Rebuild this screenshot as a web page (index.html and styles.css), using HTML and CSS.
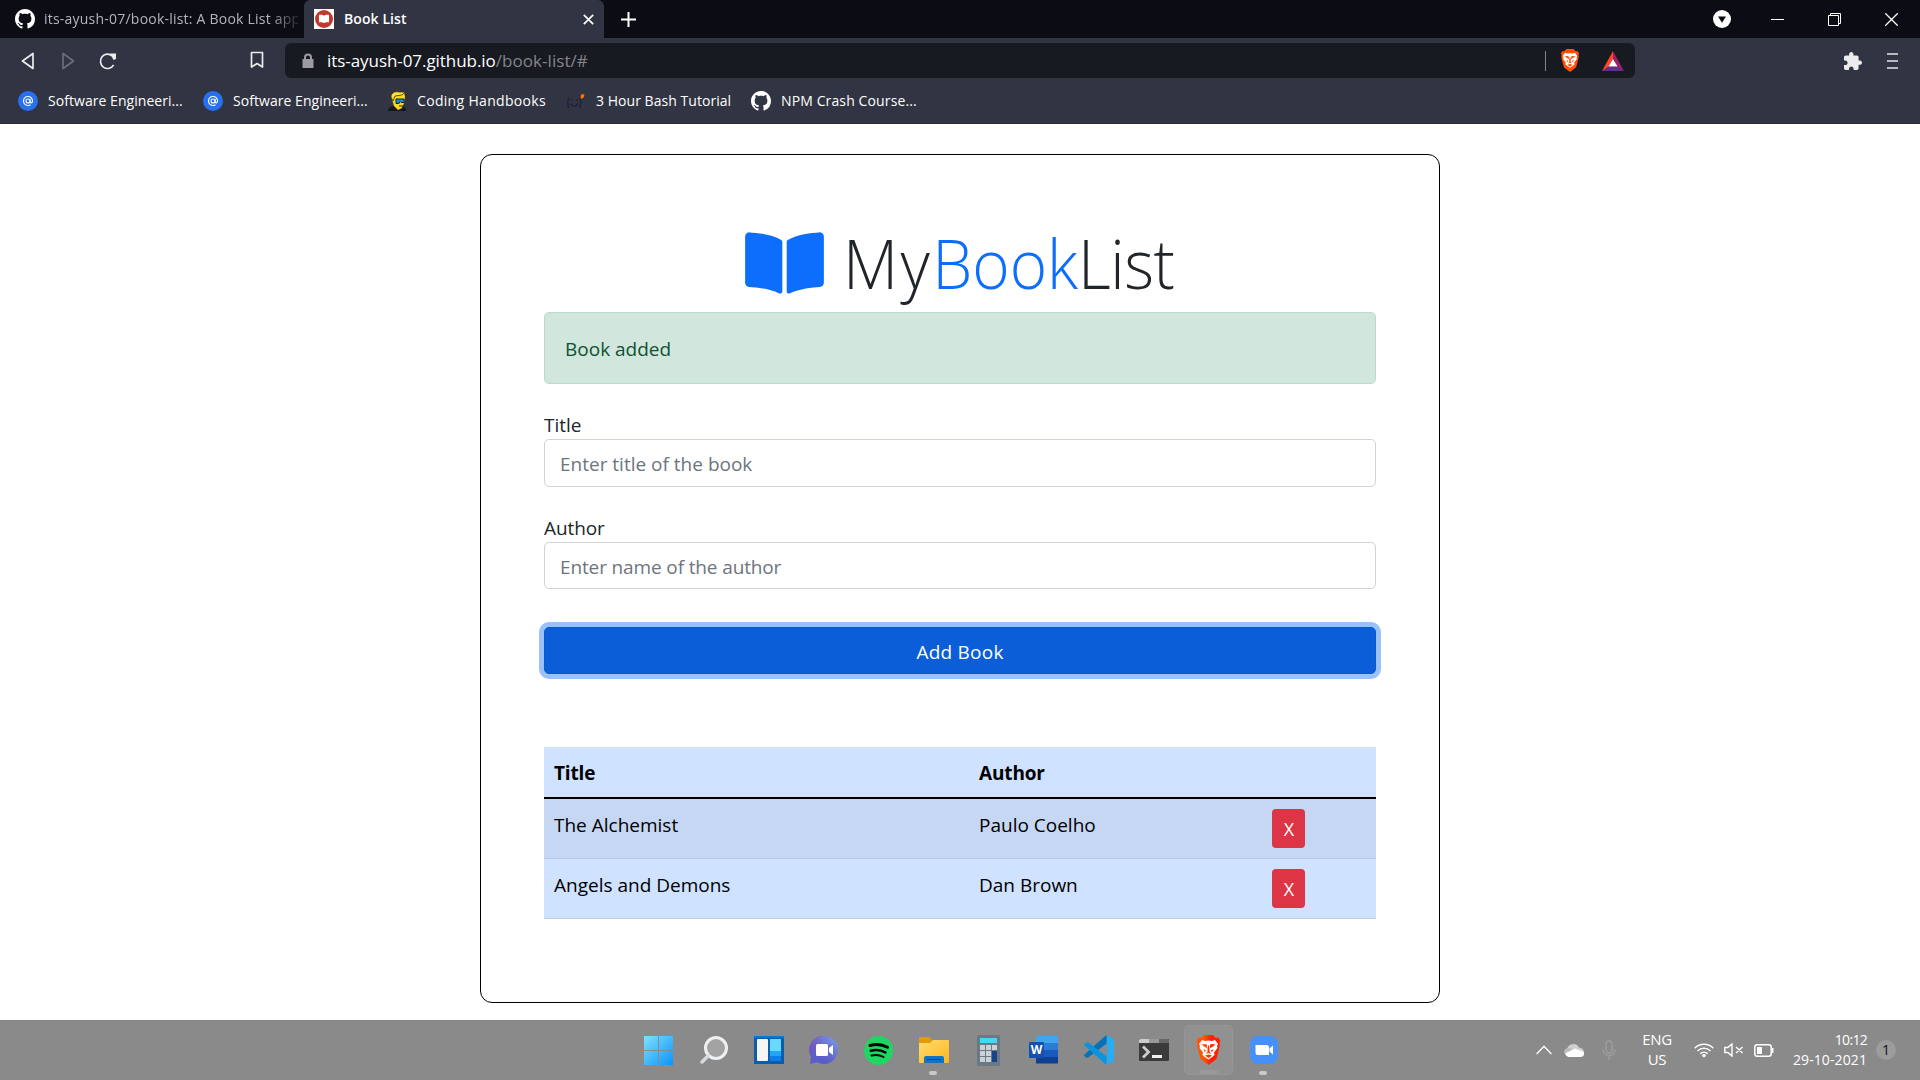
FILE: index.html
```
<!DOCTYPE html>
<html lang="en">
<head>
<meta charset="utf-8">
<title>Book List</title>
<link rel="stylesheet" href="styles.css">
</head>
<body>
<svg class="defs" aria-hidden="true">
  <defs>
    <symbol id="github" viewBox="0 0 16 16"><path fill="#fff" d="M8 0C3.58 0 0 3.58 0 8c0 3.54 2.29 6.53 5.47 7.59.4.07.55-.17.55-.38 0-.19-.01-.82-.01-1.49-2.01.37-2.53-.49-2.69-.94-.09-.23-.48-.94-.82-1.13-.28-.15-.68-.52-.01-.53.63-.01 1.08.58 1.23.82.72 1.21 1.87.87 2.33.66.07-.52.28-.87.51-1.07-1.78-.2-3.64-.89-3.64-3.95 0-.87.31-1.59.82-2.15-.08-.2-.36-1.02.08-2.12 0 0 .67-.21 2.2.82.64-.18 1.32-.27 2-.27s1.36.09 2 .27c1.53-1.04 2.2-.82 2.2-.82.44 1.1.16 1.92.08 2.12.51.56.82 1.27.82 2.15 0 3.07-1.87 3.75-3.65 3.95.29.25.54.73.54 1.48 0 1.07-.01 1.93-.01 2.2 0 .21.15.46.55.38A8.01 8.01 0 0 0 16 8c0-4.42-3.58-8-8-8z"/></symbol>
    <linearGradient id="braveFill" x1="0" x2="1" y1="0" y2="0"><stop offset=".3" stop-color="#ff5500"/><stop offset=".6" stop-color="#ff2000"/></linearGradient>
    <symbol id="brave" viewBox="0 0 50 60">
      <path d="M16 0h18l6 6 4-1 5 6-2 5 1 5-6 23c-1 4-2 5-5 7L25 60 13 51c-3-2-4-3-5-7L2 21l1-5-2-5 5-6 4 1z"/>
      <path fill="#fff" d="M12 10l6 2 7-1 7 1 6-2 6 8-2 4 1 4-7 9 1 5-6 5-6 4-6-4-6-5 1-5-7-9 1-4-2-4z"/>
      <path d="M11 19l9-1 2 2v6l-6-3zM39 19l-9-1-2 2v6l6-3zM15 28l5 3-2 4zM35 28l-5 3 2 4zM19 38l4-4v-8l2-7 2 7v8l4 4-6-2zM18 41l7-2 7 2-7 5z"/>
    </symbol>
    <symbol id="mail" viewBox="0 0 20 20"><circle cx="10" cy="10" r="10" fill="#2870f0"/><circle cx="10" cy="10" r="2" fill="none" stroke="#fff" stroke-width="1.1"/><path d="M12.1 8v2.8c0 1.6 2.4 1.6 2.4-.8a4.5 4.5 0 1 0-2 3.7" fill="none" stroke="#fff" stroke-width="1.1"/></symbol>
  </defs>
</svg>

<header class="browser">
  <div class="tabstrip">
    <div class="tab">
      <svg class="i20"><use href="#github"/></svg>
      <span class="tab-title">its-ayush-07/book-list: A Book List app</span>
    </div>
    <div class="tab active">
      <svg class="i20" viewBox="0 0 20 20"><path fill="#fff" d="M0 0h20v20H0z"/><circle cx="10" cy="10" r="9" fill="#c0392b"/><path fill="#fff" d="M5 6c2-.4 4 0 5 .8 1-.8 3-1.200 5-.8v7.300c-2-.3-4 0-5 .8-1-.8-3-1.100-5-.8z"/></svg>
      <span class="tab-title">Book List</span>
      <svg class="tab-close" viewBox="0 0 11 11"><path d="M.8.8l9.400 9.400M10.200.8L.8 10.200"/></svg>
    </div>
    <svg class="new-tab" viewBox="0 0 15 15"><path d="M7.500 0v15M0 7.500h15"/></svg>
    <div class="window-controls">
      <svg class="i18" viewBox="0 0 18 18"><circle cx="9" cy="9" r="9" fill="#fff"/><path fill="#0b0c14" d="M5 6.500h8L9 12.800z"/></svg>
      <svg class="ctl" viewBox="0 0 13 13"><path d="M0 6.500h13"/></svg>
      <svg class="ctl" viewBox="0 0 13 13"><path d="M.5 2.500h10v10H.5zM2.500 2.500v-2h10v10h-2"/></svg>
      <svg class="ctl close" viewBox="0 0 13 13"><path d="M.3.3l12.400 12.400M12.700.3L.3 12.700"/></svg>
    </div>
  </div>

  <div class="toolbar">
    <svg class="back" viewBox="0 0 14 18"><path d="M12 1.500v15L1.500 9z"/></svg>
    <svg class="forward" viewBox="0 0 14 18"><path d="M2 1.500v15L12.500 9z"/></svg>
    <svg class="reload" viewBox="0 0 20 18"><path d="M15.600 12.800A7 7.200 0 1 1 14 3.800"/><path class="dot" d="M12 1.500h6v5.500l-2.500 1z"/></svg>
    <svg class="save" viewBox="0 0 14 18"><path d="M1.500 1.500h11v14.500L7 12.500 1.500 16z"/></svg>
    <div class="address">
      <svg class="lock" viewBox="0 0 12 15"><path fill="#9a9ba3" d="M.5 6H2V4.500a4 4 0 0 1 8 0V6h1.500v9H.5zM4 6h4V4.500a2 2 0 0 0-4 0z"/></svg>
      <span class="url"><span class="host">its-ayush-07.github.io</span>/book-list/#</span>
      <span class="divider"></span>
      <svg class="shield" fill="#ff4d0a"><use href="#brave"/></svg>
      <svg class="rewards" viewBox="0 0 22 20"><path fill="#ff4724" d="M11 0v8l-4.500 8L0 20z"/><path fill="#9e1f63" d="M11 0l11 20-6.500-4L11 8z"/><path fill="#662d91" d="M0 20l6.500-4.500h9L22 20z"/><path fill="#fff" d="M11 8l4.500 7.500h-9z"/></svg>
    </div>
    <svg class="puzzle" viewBox="2 1 21 21"><path fill="#ececee" d="M20.500 11H19V7c0-1.100-.9-2-2-2h-4V3.500C13 2.120 11.880 1 10.500 1S8 2.120 8 3.500V5H4c-1.100 0-1.990.9-1.990 2v3.800H3.500c1.490 0 2.700 1.210 2.700 2.700s-1.210 2.700-2.700 2.700H2V20c0 1.100.9 2 2 2h3.800v-1.500c0-1.490 1.210-2.700 2.700-2.700 1.490 0 2.700 1.210 2.700 2.700V22H17c1.100 0 2-.9 2-2v-4h1.500c1.380 0 2.500-1.120 2.500-2.500S21.880 11 20.500 11z"/></svg>
    <svg class="menu" viewBox="0 0 11 16"><path stroke="#e6e6ea" stroke-width="1.500" d="M0 1h11M0 8h11M0 15h11"/></svg>
  </div>

  <nav class="bookmarks">
    <a class="bm bm-eng"><svg class="i20"><use href="#mail"/></svg><span>Software Engineeri...</span></a>
    <a class="bm bm-eng"><svg class="i20"><use href="#mail"/></svg><span>Software Engineeri...</span></a>
    <a class="bm bm-code"><svg class="i20" viewBox="0 0 20 20"><path fill="#16181e" d="M0 20c0-3 3-5 6-5h7c3 0 5 2 5 5z"/><path fill="#f8d820" d="M3 5l4-4 9 0 1 5-1 6-2 5-4 2-4-4z"/><path d="M3 6c0-4 4-6 8-5l6 0-3 3-7 1-2 5z" fill="#fbe337" stroke="#38300c" stroke-width=".8"/><path fill="#1390d8" stroke="#152030" stroke-width="1" d="M8 8h8v3.500h-3l-1-1-1 2H8z"/><path stroke="#252014" stroke-width="1" d="M11 15h4"/></svg><span>Coding Handbooks</span></a>
    <a class="bm bm-bash"><svg class="i20" viewBox="0 0 20 20"><g fill="none" stroke="#20213f" stroke-width="1.400"><path d="M3.500 7C1.500 7 2.500 10 1.500 11.500 2.500 13 1.500 16.500 3.500 16.500M13 7c2 0 1 3 2 4.500-1 1.500 0 5-2 5"/><path d="M4.500 12.500c1 3.500 6.500 3.500 7.500 0M5.500 8v2M11 8v2"/></g><path fill="#ff7300" d="M14.500 6.500l.5-3L18.500 3l-.8 3.500L15.500 8z"/></svg><span>3 Hour Bash Tutorial</span></a>
    <a class="bm bm-npm"><svg class="i20"><use href="#github"/></svg><span>NPM Crash Course...</span></a>
  </nav>
</header>

<main class="page">
  <section class="card">
    <h1 class="brand">
      <svg class="book" viewBox="0 0 576 512"><path fill="#0d6efd" d="M542.220 32.050c-54.800 3.110-163.720 14.430-230.960 55.590-4.640 2.840-7.270 7.890-7.270 13.170v363.870c0 11.550 12.630 18.850 23.280 13.490 69.180-34.820 169.230-44.320 218.700-46.920 16.890-.89 30.020-14.430 30.020-30.660V62.750c.01-17.710-15.350-31.740-33.770-30.700zM264.730 87.640C197.500 46.480 88.580 35.170 33.780 32.050 15.360 31.010 0 45.040 0 62.750V400.600c0 16.240 13.130 29.780 30.020 30.660 49.490 2.600 149.590 12.110 218.770 46.950 10.620 5.350 23.210-1.940 23.210-13.460V100.630c0-5.290-2.620-10.140-7.270-12.990z"/></svg>
      <span class="brand-text"><span class="my">My</span><span class="accent">Book</span><span class="list">List</span></span>
    </h1>
    <div class="alert">Book added</div>
    <form class="book-form">
      <div class="field">
        <label for="title">Title</label>
        <input id="title" type="text" placeholder="Enter title of the book">
      </div>
      <div class="field field-author">
        <label for="author">Author</label>
        <input id="author" type="text" placeholder="Enter name of the author">
      </div>
      <button class="submit" type="button">Add Book</button>
    </form>
    <table class="books">
      <colgroup><col class="c-title"><col class="c-author"><col class="c-action"></colgroup>
      <thead><tr><th>Title</th><th>Author</th><th></th></tr></thead>
      <tbody>
        <tr><td>The Alchemist</td><td>Paulo Coelho</td><td class="action"><a class="remove">X</a></td></tr>
        <tr><td>Angels and Demons</td><td>Dan Brown</td><td class="action"><a class="remove">X</a></td></tr>
      </tbody>
    </table>
  </section>
</main>

<footer class="taskbar">
  <div class="apps">
    <div class="app"><svg width="29" height="29" viewBox="0 0 29 29"><defs><linearGradient id="win" x1="0" y1="0" x2="1" y2="1"><stop offset="0" stop-color="#7fe0ff"/><stop offset="1" stop-color="#0a94f8"/></linearGradient></defs><path fill="url(#win)" d="M0 0h14v14H0zM15 0h14v14H15zM0 15h14v14H0zM15 15h14v14H15z"/></svg></div>
    <div class="app"><svg width="28" height="28" viewBox="0 0 28 28"><circle cx="16" cy="12" r="10.500" fill="#a3a3a3" stroke="#eef0f2" stroke-width="3"/><path d="M8 20l-6 6" stroke="#d5dade" stroke-width="3.500" stroke-linecap="round"/></svg></div>
    <div class="app"><svg width="30" height="28" viewBox="0 0 30 28"><path fill="#0b5cab" d="M0 0h30v28H0z"/><path fill="#0a78d0" d="M0 0h30v2H0z"/><rect x="3" y="3" width="11" height="22" rx="1" fill="#f5f5f5"/><path fill="#6bd9ff" d="M16 3h11v12H16z"/><path fill="#22a4f8" d="M16 15h11v5H16z"/><path fill="#0c80e8" d="M16 20h11v5H16z"/></svg></div>
    <div class="app"><svg width="29" height="28" viewBox="0 0 29 28"><defs><linearGradient id="chat" x1="0" y1="0" x2="1" y2="1"><stop offset="0" stop-color="#7d54ae"/><stop offset=".5" stop-color="#5b5fc7"/><stop offset="1" stop-color="#5757c4"/></linearGradient><linearGradient id="chatTop" x1="0" y1="1" x2="1" y2="0"><stop offset=".3" stop-color="#7484dc" stop-opacity="0"/><stop offset="1" stop-color="#7da6f2"/></linearGradient></defs><path fill="url(#chat)" d="M15 0a14 14 0 1 1-7 26.200L1 28l1-7A14 14 0 0 1 15 0z"/><circle cx="15" cy="14" r="14" fill="url(#chatTop)"/><rect x="7" y="8" width="12" height="12" rx="1.500" fill="#fff"/><path fill="#fff" d="M20 12l4-3v10l-4-3z"/></svg></div>
    <div class="app"><svg width="29" height="29" viewBox="0 0 29 29"><circle cx="14.500" cy="14.500" r="14.500" fill="#1ed760"/><g fill="none" stroke="#000" stroke-linecap="round"><path stroke-width="3" d="M6 9.500c6-1.800 12-1.300 17.500 1.800"/><path stroke-width="2.500" d="M6.800 14.700c5-1.400 10-.9 14.600 1.700"/><path stroke-width="2" d="M7.500 19.500c4-1.100 8.200-.7 12 1.500"/></g></svg></div>
    <div class="app running"><svg width="30" height="28" viewBox="0 0 30 28"><defs><linearGradient id="fold" x1="0" y1="0" x2="1" y2="1"><stop offset="0" stop-color="#ffdd70"/><stop offset="1" stop-color="#ffb51c"/></linearGradient></defs><path fill="#df9d07" d="M0 2q0-1 1-1h9l3 3v6H0z"/><path fill="url(#fold)" d="M0 7h11l3-3h15q1 0 1 1v21q0 1-1 1H0z"/><path fill="#1272c4" d="M5 27v-5q0-2 2-2h16q2 0 2 2v5z"/><path stroke="#0b4378" d="M8 23.500h14"/></svg></div>
    <div class="app"><svg width="23" height="31" viewBox="0 0 23 31"><rect width="23" height="31" rx="1.500" fill="#6c7884"/><path fill="#43d8f8" d="M3 3h17v5H3z"/><path fill="#c9d1da" d="M3 10h5v5H3zM9 10h5v5H9zM15 10h5v5h-5zM3 16h5v5H3zM9 16h5v5H9zM3 22h5v5H3zM9 22h5v5H9z"/><path fill="#16458a" d="M15 16h5v11h-5z"/></svg></div>
    <div class="app"><svg width="30" height="28" viewBox="0 0 30 28"><path fill="#41a5ee" d="M7 0h22v7H7z"/><path fill="#2b7cd3" d="M7 7h22v7H7z"/><path fill="#185abd" d="M7 14h22v7H7z"/><path fill="#103f91" d="M7 21h22v6.500H7z"/><rect y="6" width="15" height="16" rx="1" fill="#1650ae"/><text class="word-letter" x="7.500" y="18" text-anchor="middle">W</text></svg></div>
    <div class="app"><svg width="30" height="30" viewBox="0 0 30 30"><path fill="#0a85cf" d="M22.500 0v8.500L4 22.500 1.500 22 0 20z"/><path fill="#0a70b8" d="M22.500 0L0 20l2 2.500h2L22.500 8.500z"/><path fill="#0c93df" d="M0 10l2-2.500h2.500L22.500 21.500V30z"/><path fill="#28acf3" d="M22 0l7 3.200q1 .6 1 1.800v20q0 1.200-1 1.800L22 30q1-.5 1-2V2q0-1.500-1-2z"/></svg></div>
    <div class="app"><svg width="30" height="22" viewBox="0 0 30 22"><rect width="30" height="22" rx="1" fill="#3b3b3b"/><path fill="#ccc" d="M1 0h9v4H0V1z"/><path fill="#999" d="M10 0h10v4H10z"/><path fill="#666" d="M20 0h9l1 1v3H20z"/><path fill="none" stroke="#ccc" stroke-width="2.800" d="M4 7.500l5.500 5.500L4 18.500"/><path fill="#f0f0f0" d="M13 16h10v3H13z"/></svg></div>
    <div class="app current"><svg width="25" height="30" fill="url(#braveFill)"><use href="#brave"/></svg></div>
    <div class="app running"><svg width="28" height="28" viewBox="0 0 28 28"><rect width="28" height="28" rx="8" fill="#4690fb"/><path fill="#fff" d="M5.500 9h11q2.500 0 2.500 2.500V19H8q-2.500 0-2.500-2.500zM19.500 12.500L23 9.500v9l-3.500-3z"/></svg></div>
  </div>
  <div class="tray">
    <svg class="chevron" viewBox="0 0 16 10"><path fill="none" stroke="#fff" stroke-width="1.300" d="M.6 9L8 1.300 15.400 9"/></svg>
    <svg class="cloud" viewBox="0 0 20 14"><path fill="#d0d0d0" d="M3 6a6.500 6.500 0 0 1 12-1.500q4.500.5 5 4.500l-8 3z"/><path fill="#bcbcbc" d="M0 10q-.5-4 4-5 3-.5 5 2l-4 5z"/><path fill="#fff" d="M1 10.500L11 5.500l9 3.500q1 4-3 5H4.500Q2 13.500 1 10.500z"/></svg>
    <svg class="mic" viewBox="0 0 16 20"><g fill="none" stroke="#9e9e9e" stroke-width="1.400"><rect x="5" y="1" width="6" height="12" rx="3"/><path d="M2 9.500a6 6 0 0 0 12 0M8 15.500V20"/></g></svg>
    <div class="lang"><span>ENG</span><span>US</span></div>
    <svg class="wifi" viewBox="0 0 20 16"><g fill="none" stroke="#fff" stroke-width="1.400"><path d="M.7 6.200a13 13 0 0 1 18.600 0M3.500 9a9.200 9.200 0 0 1 13 0M6.300 11.700a5.400 5.400 0 0 1 7.400 0"/></g><circle cx="10" cy="13.500" r="1.800" fill="#fff"/></svg>
    <svg class="speaker" viewBox="0 0 20 14"><path fill="none" stroke="#fff" stroke-width="1.400" d="M.8 4.500h3L8 .9v12.200L3.800 9.500h-3zM12 4l6.500 6M18.500 4L12 10"/></svg>
    <svg class="battery" viewBox="0 0 20 13"><rect x=".8" y=".8" width="16.400" height="11.400" rx="2.500" fill="none" stroke="#fff" stroke-width="1.500"/><path fill="#fff" d="M3 3h5v7H3zM18 4h1.500v5H18z"/></svg>
    <div class="clock"><span class="time">10:12</span><span class="date">29-10-2021</span></div>
    <span class="count">1</span>
  </div>
</footer>
</body>
</html>
```
FILE: styles.css
```
* { box-sizing: border-box; }
body {
  margin: 0;
  width: 1920px;
  height: 1080px;
  overflow: hidden;
  display: flex;
  flex-direction: column;
  font-family: "Open Sans", "Noto Sans", sans-serif;
  background: #fff;
}
svg { display: block; flex: none; }
.defs { width: 0; height: 0; position: absolute; }
.i20 { width: 20px; height: 20px; }
.i18 { width: 18px; height: 18px; }

/* browser chrome */
.browser { height: 124px; background: #313442; border-bottom: 1px solid #292b37; color: #fff; font-size: 14px; }
.tabstrip { height: 38px; background: #0b0c14; display: flex; align-items: center; }
.tab { width: 304px; height: 38px; padding: 0 6px 0 15px; display: flex; align-items: center; gap: 9px; color: #b4b5ba; }
.tab-title { flex: 1; overflow: hidden; white-space: nowrap; letter-spacing: .22px; line-height: 20px; padding-bottom: 1px; -webkit-mask-image: linear-gradient(90deg, #000 225px, transparent 260px); }
.tab.active { width: 300px; padding: 0 10px; gap: 10px; background: #313442; border-radius: 6px 6px 0 0; color: #fff; font-weight: 600; }
.active .tab-title { letter-spacing: .09px; -webkit-mask-image: none; }
.tab-close { width: 11px; height: 11px; stroke: #fff; stroke-width: 1.7; }
.new-tab { width: 15px; height: 15px; margin-left: 17px; stroke: #fff; stroke-width: 2; }
.window-controls { margin-left: auto; padding-right: 22px; display: flex; align-items: center; }
.ctl { width: 13px; height: 13px; fill: none; stroke: #fff; stroke-width: 1; margin-left: 44px; }
.ctl.close { stroke-width: 1.3; }
.i18 + .ctl { margin-left: 40px; }

.toolbar { height: 45px; display: flex; align-items: center; padding: 0 22px 0 21px; }
.toolbar > svg { fill: none; stroke: #ececee; stroke-width: 1.7; stroke-linejoin: round; }
.back, .forward, .save { width: 14px; height: 18px; }
.toolbar > .forward { margin-left: 26px; stroke: #6b6d78; }
.reload { width: 20px; height: 18px; margin-left: 23px; }
.reload .dot { fill: #ececee; stroke: none; }
.toolbar > .save { margin-left: 132px; margin-top: -1px; }
.address { width: 1350px; height: 35px; margin-left: 21px; padding: 0 11px 0 17px; border-radius: 6px; background: #171a21; display: flex; align-items: center; }
.lock { width: 12px; height: 15px; }
.url { margin-left: 13px; padding-bottom: 1px; font-size: 17px; color: #83858b; letter-spacing: .06px; }
.host { color: #fff; letter-spacing: -.06px; }
.divider { width: 1px; height: 20px; margin-left: auto; background: #85868b; }
.shield { width: 20px; height: 23px; margin-left: 14px; }
.rewards { width: 22px; height: 20px; margin-left: 22px; }
.toolbar > .puzzle { width: 18px; height: 18px; margin-left: auto; stroke: none; }
.menu { width: 11px; height: 16px; margin-left: 25px; }

.bookmarks { height: 36px; display: flex; align-items: center; padding-left: 18px; }
.bm { display: flex; align-items: center; gap: 10px; white-space: nowrap; letter-spacing: .05px; }
.bm span { padding-bottom: 2px; }
.bm-eng { width: 185px; }
.bm-code { width: 178px; gap: 9px; letter-spacing: .32px; }
.bm-bash { width: 185px; letter-spacing: .04px; }
.bm-npm { letter-spacing: .12px; }

/* page */
.page { flex: 1; padding-top: 30px; }
.card { width: 960px; height: 849px; margin: 0 auto; padding: 65px 63px 0; border: 1px solid #000; border-radius: 12px; color: #212529; font-size: 19px; line-height: 30px; }
.brand { margin: 0 0 8px 201px; height: 84px; display: flex; align-items: center; gap: 19px; font-size: 69px; font-weight: 300; line-height: 84px; }
.book { width: 79px; height: 70px; margin-top: 2px; }
.brand-text { white-space: nowrap; transform: scaleX(.926); transform-origin: left; }
.my { letter-spacing: 2.5px; }
.accent { color: #0d6efd; }
.list { letter-spacing: -.5px; }
.alert { height: 72px; margin-bottom: 25px; padding: 21px 20px; border: 1px solid #badbcc; border-radius: 5px; background: #d1e7dd; color: #0f5132; }
.field { display: flex; flex-direction: column; margin-bottom: 25px; }
.field label { height: 30px; padding-top: 1px; }
.field input { height: 48px; padding: 2px 15px 0; border: 1px solid #ced4da; border-radius: 5px; background: #fff; font: inherit; color: #212529; }
.field input::placeholder { color: #6c757d; opacity: 1; }
.field-author { margin-bottom: 38px; letter-spacing: -.1px; }
.field.field-author input { height: 47px; letter-spacing: -.13px; }
.submit { display: block; width: 100%; height: 47px; padding: 2px 0 0; border: 1px solid #0a58ca; border-radius: 5px; background: #0b5ed7; color: #fff; font: inherit; letter-spacing: .24px; box-shadow: 0 0 0 5px #98c1fe; }
.books { width: 832px; margin-top: 73px; border-collapse: separate; border-spacing: 0; table-layout: fixed; background: #cfe2ff; color: #000; }
.c-title { width: 425px; }
.c-author { width: 293px; }
.books th, .books td { padding: 11px 10px 9px; text-align: left; vertical-align: top; }
.books th { height: 52px; border-bottom: 2px solid #000; letter-spacing: -.15px; }
.books td { height: 60px; border-bottom: 1px solid #bacbe6; }
.books td.action { padding: 10px; }
.books tbody tr:first-child td { background: #c5d7f2; }
.remove { display: flex; align-items: center; justify-content: center; width: 33px; height: 39px; padding: 1px 0 0 1px; border-radius: 4px; background: #dc3545; color: #fff; font-size: 18px; }

/* taskbar */
.taskbar { height: 60px; background: #8a8a8a; border-top: 1px solid #838383; display: flex; color: #fff; }
.apps { display: flex; margin-left: 631px; }
.app { width: 55px; height: 58px; display: flex; align-items: center; justify-content: center; position: relative; }
.running::after { content: ""; position: absolute; bottom: 4px; left: 23px; width: 8px; height: 4px; border-radius: 2px; background: #c9c9c9; }
.current::before { content: ""; position: absolute; inset: 4px 3px; border: 1px solid #969696; border-radius: 5px; background: #919191; }
.current::after { content: ""; position: absolute; bottom: 5px; left: 18px; width: 19px; height: 4px; border-radius: 2px; background: #999; }
.current svg { position: relative; }
.word-letter { fill: #fff; font-size: 12px; font-weight: 700; }
.tray { margin-left: auto; padding-right: 24px; display: flex; align-items: center; height: 58px; }
.chevron { width: 16px; height: 10px; }
.cloud { width: 20px; height: 14px; margin-left: 12px; }
.mic { width: 16px; height: 20px; margin-left: 17px; }
.lang { width: 30px; margin: -2px 0 0 25px; display: flex; flex-direction: column; align-items: center; font-size: 15px; line-height: 20px; letter-spacing: -.3px; }
.wifi { width: 20px; height: 16px; margin-left: 22px; }
.speaker { width: 20px; height: 14px; margin-left: 10px; }
.battery { width: 20px; height: 13px; margin-left: 10px; }
.clock { width: 75px; margin: -1px 0 0 18px; display: flex; flex-direction: column; align-items: flex-end; font-size: 14px; line-height: 20px; white-space: nowrap; }
.time { letter-spacing: -.7px; }
.date { letter-spacing: .1px; }
.count { width: 20px; height: 20px; margin-left: 9px; border-radius: 10px; background: #9c9c9c; color: #111; font-size: 14px; line-height: 20px; text-align: center; }
```
